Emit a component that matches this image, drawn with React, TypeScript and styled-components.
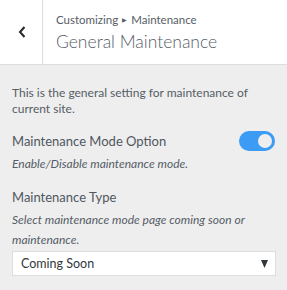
import React, { useState } from 'react';
import styled, { createGlobalStyle } from 'styled-components';

const GlobalStyle = createGlobalStyle`
  html, body {
    margin: 0;
    padding: 0;
    background: #eeeeee;
    font-family: Lato, "Noto Sans", sans-serif;
    color: #555d66;
  }
`;

const Panel = styled.div`
  width: 287px;
  height: 290px;
  background: #eeeeee;
  overflow: hidden;
`;

const Header = styled.div`
  display: flex;
  height: 65px;
  background: #fff;
  border-bottom: 1px solid #dddddd;
  box-sizing: border-box;
`;

const BackButton = styled.button`
  width: 43px;
  flex: none;
  display: flex;
  align-items: center;
  justify-content: center;
  background: #fff;
  border: none;
  border-right: 1px solid #dddddd;
  padding: 0 0 0 2px;
  cursor: pointer;
`;

const Titles = styled.div`
  display: flex;
  flex-direction: column;
  justify-content: center;
  padding-left: 13px;
  padding-top: 1px;
`;

const Crumb = styled.span`
  font-size: 11.5px;
  line-height: 18px;
  color: #555d66;
`;

const Sep = styled.span`
  font-size: 6px;
  vertical-align: 2px;
  margin: 0 4px;
`;

const Title = styled.h3`
  margin: 0;
  font-size: 17.5px;
  font-weight: 300;
  line-height: 26px;
  color: #555d66;
`;

const Body = styled.div`
  padding: 20px 12px 0 12px;
`;

const Intro = styled.p`
  margin: 0 0 12px;
  font-size: 12px;
  line-height: 16px;
  color: #555d66;
`;

const Control = styled.div`
  margin-bottom: 11px;
`;

const LabelRow = styled.div`
  display: flex;
  align-items: center;
  justify-content: space-between;
`;

const Label = styled.div`
  font-size: 13px;
  line-height: 24px;
  color: #50575e;
`;

const Hint = styled.p`
  margin: 1px 0 0;
  font-size: 12px;
  font-style: italic;
  line-height: 20px;
  color: #555d66;
`;

const Switch = styled.button<{ $on: boolean }>`
  position: relative;
  width: 36px;
  height: 20px;
  border: none;
  border-radius: 10px;
  padding: 0;
  background: ${p => (p.$on ? '#3b9bf5' : '#ccc')};
  cursor: pointer;
`;

const Knob = styled.span<{ $on: boolean }>`
  position: absolute;
  top: 3px;
  left: ${p => (p.$on ? '19px' : '3px')};
  width: 14px;
  height: 14px;
  border-radius: 50%;
  background: #eeeeee;
`;

const SelectBox = styled.div`
  display: flex;
  align-items: center;
  justify-content: space-between;
  height: 25px;
  margin: 1px -1px 0 0;
  padding: 0 7px 0 8px;
  background: #fff;
  border: 1px solid #dddddd;
  box-sizing: border-box;
  font-size: 12.5px;
  color: #32373c;
`;

const Caret = () => (
  <svg width="7" height="8" viewBox="0 0 7 8">
    <path d="M0 0H7L3.5 8Z" fill="#32373c" />
  </svg>
);

const BackIcon = () => (
  <svg width="8" height="12" viewBox="0 0 8 12">
    <path d="M6.5 1L2 6l4.5 5" stroke="#23282d" strokeWidth="2" fill="none" />
  </svg>
);

export default function App() {
  const [on, setOn] = useState(true);

  return (
    <Panel>
      <GlobalStyle />
      <Header>
        <BackButton aria-label="Back">
          <BackIcon />
        </BackButton>
        <Titles>
          <Crumb>Customizing<Sep>▶</Sep>Maintenance</Crumb>
          <Title>General Maintenance</Title>
        </Titles>
      </Header>
      <Body>
        <Intro>This is the general setting for maintenance of current site.</Intro>
        <Control>
          <LabelRow>
            <Label>Maintenance Mode Option</Label>
            <Switch $on={on} onClick={() => setOn(!on)}>
              <Knob $on={on} />
            </Switch>
          </LabelRow>
          <Hint>Enable/Disable maintenance mode.</Hint>
        </Control>
        <Control>
          <Label>Maintenance Type</Label>
          <Hint>Select maintenance mode page coming soon or maintenance.</Hint>
          <SelectBox>
            Coming Soon
            <Caret />
          </SelectBox>
        </Control>
      </Body>
    </Panel>
  );
}
